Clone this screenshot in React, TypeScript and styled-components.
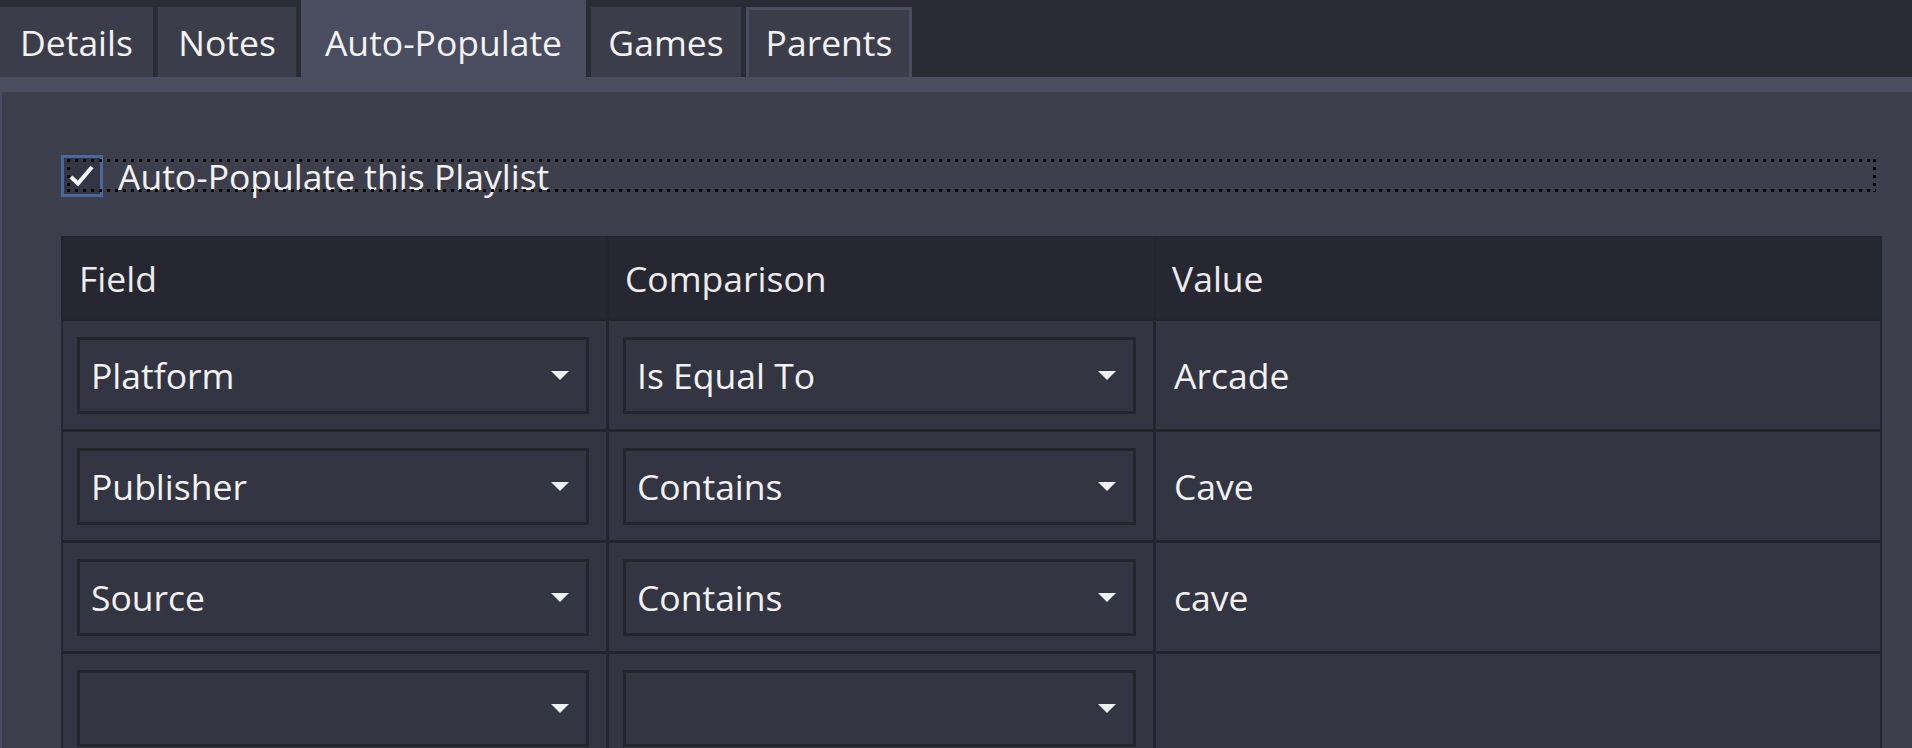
import React from 'react';
import styled, { createGlobalStyle } from 'styled-components';

const GlobalStyle = createGlobalStyle`
  html, body {
    margin: 0;
    padding: 0;
    background: #2b2b35;
    overflow: hidden;
  }
  * {
    box-sizing: border-box;
  }
`;

const Window = styled.div`
  width: 1912px;
  height: 748px;
  overflow: hidden;
  display: flex;
  flex-direction: column;
  background: #2b2b35;
  color: #f2f2f2;
  font-family: 'Open Sans', 'Noto Sans', sans-serif;
  font-size: 35.5px;
`;

// 탭 영역
const TabBar = styled.div`
  flex-shrink: 0;
  display: flex;
  align-items: flex-end;
  gap: 5px;
  height: 77px;
`;

const Tab = styled.div<{ $width: number; $active?: boolean; $hover?: boolean }>`
  width: ${(p) => p.$width}px;
  height: ${(p) => (p.$active ? 77 : 70)}px;
  padding-top: ${(p) => (p.$active ? 7 : 0)}px;
  display: flex;
  align-items: center;
  justify-content: center;
  background: ${(p) => (p.$active ? '#4a4c5f' : '#3c3d4b')};
  box-shadow: ${(p) =>
    p.$hover ? 'inset 3px 3px 0 #4a4c5f, inset -3px 0 0 #4a4c5f' : 'none'};
  white-space: nowrap;
`;

const Strip = styled.div`
  flex-shrink: 0;
  height: 15px;
  background: #4a4c5f;
`;

const Panel = styled.div`
  flex: 1 0 auto;
  background: #3d3e4c;
  border-left: 2px solid #4a4c5f;
  padding: 63px 30px 0 59px;
  display: flex;
  flex-direction: column;
  gap: 39px;
`;

// 자동 채우기 체크박스
const CheckRow = styled.label`
  position: relative;
  flex-shrink: 0;
  display: flex;
  align-items: center;
  gap: 15px;
  height: 42px;
`;

const FocusRect = styled.div`
  position: absolute;
  left: 6px;
  right: 6px;
  top: 4px;
  bottom: 5px;
  pointer-events: none;
  background-image:
    repeating-linear-gradient(90deg, #000 0 3px, transparent 3px 8px),
    repeating-linear-gradient(90deg, #000 0 3px, transparent 3px 8px),
    repeating-linear-gradient(180deg, #000 0 3px, transparent 3px 8px),
    repeating-linear-gradient(180deg, #000 0 3px, transparent 3px 8px);
  background-size: 100% 3px, 100% 3px, 3px 100%, 3px 100%;
  background-position: 0 0, 0 100%, 0 0, 100% 0;
  background-repeat: no-repeat;
`;

const CheckBox = styled.div`
  width: 42px;
  height: 42px;
  border: 3px solid #46689c;
  background: #343543;
  display: flex;
  align-items: center;
  justify-content: center;
`;

const CheckLabel = styled.span`
  line-height: 42px;
  white-space: nowrap;
`;

// 조건 테이블
const Table = styled.div`
  flex-shrink: 0;
  display: grid;
  grid-template-columns: 543px 544px 1fr;
  grid-template-rows: 81px;
  grid-auto-rows: 108px;
  gap: 3px;
  padding: 0 2px;
  border-top: 1px solid #24242d;
  background: #24242d;
`;

const HeadCell = styled.div`
  background: #272731;
  display: flex;
  align-items: center;
  padding-left: 16px;
  color: #ececec;
`;

const Cell = styled.div<{ $text?: boolean }>`
  background: #343543;
  display: flex;
  align-items: center;
  padding: ${(p) => (p.$text ? '0 0 0 18px' : '0 17px 0 14px')};
`;

const Combo = styled.div`
  flex: 1;
  height: 77px;
  border: 3px solid #25252e;
  background: #343543;
  display: flex;
  align-items: center;
  justify-content: space-between;
  padding: 0 17px 0 11px;
  white-space: nowrap;
`;

const Arrow = () => (
  <svg width="18" height="9" viewBox="0 0 18 9">
    <path d="M0 0 L18 0 L9 9 Z" fill="#f0f0f0" />
  </svg>
);

const Check = () => (
  <svg width="36" height="36" viewBox="0 0 36 36">
    <path
      d="M7 19 L14 25.5 L28 9"
      fill="none"
      stroke="#f4f4f4"
      strokeWidth="4"
      strokeLinejoin="miter"
    />
  </svg>
);

const tabs = [
  { label: 'Details', width: 153 },
  { label: 'Notes', width: 138 },
  { label: 'Auto-Populate', width: 285, active: true },
  { label: 'Games', width: 150 },
  { label: 'Parents', width: 166, hover: true },
];

const rows = [
  { field: 'Platform', comparison: 'Is Equal To', value: 'Arcade' },
  { field: 'Publisher', comparison: 'Contains', value: 'Cave' },
  { field: 'Source', comparison: 'Contains', value: 'cave' },
  { field: '', comparison: '', value: '' },
];

export default function App() {
  return (
    <>
      <GlobalStyle />
      <Window>
        <TabBar>
          {tabs.map((t) => (
            <Tab key={t.label} $width={t.width} $active={t.active} $hover={t.hover}>
              {t.label}
            </Tab>
          ))}
        </TabBar>
        <Strip />
        <Panel>
          <CheckRow>
            <CheckBox>
              <Check />
            </CheckBox>
            <CheckLabel>Auto-Populate this Playlist</CheckLabel>
            <FocusRect />
          </CheckRow>

          <Table>
            <HeadCell>Field</HeadCell>
            <HeadCell>Comparison</HeadCell>
            <HeadCell>Value</HeadCell>
            {rows.map((r, idx) => (
              <React.Fragment key={idx}>
                <Cell>
                  <Combo>
                    <span>{r.field}</span>
                    <Arrow />
                  </Combo>
                </Cell>
                <Cell>
                  <Combo>
                    <span>{r.comparison}</span>
                    <Arrow />
                  </Combo>
                </Cell>
                <Cell $text>{r.value}</Cell>
              </React.Fragment>
            ))}
          </Table>
        </Panel>
      </Window>
    </>
  );
}
